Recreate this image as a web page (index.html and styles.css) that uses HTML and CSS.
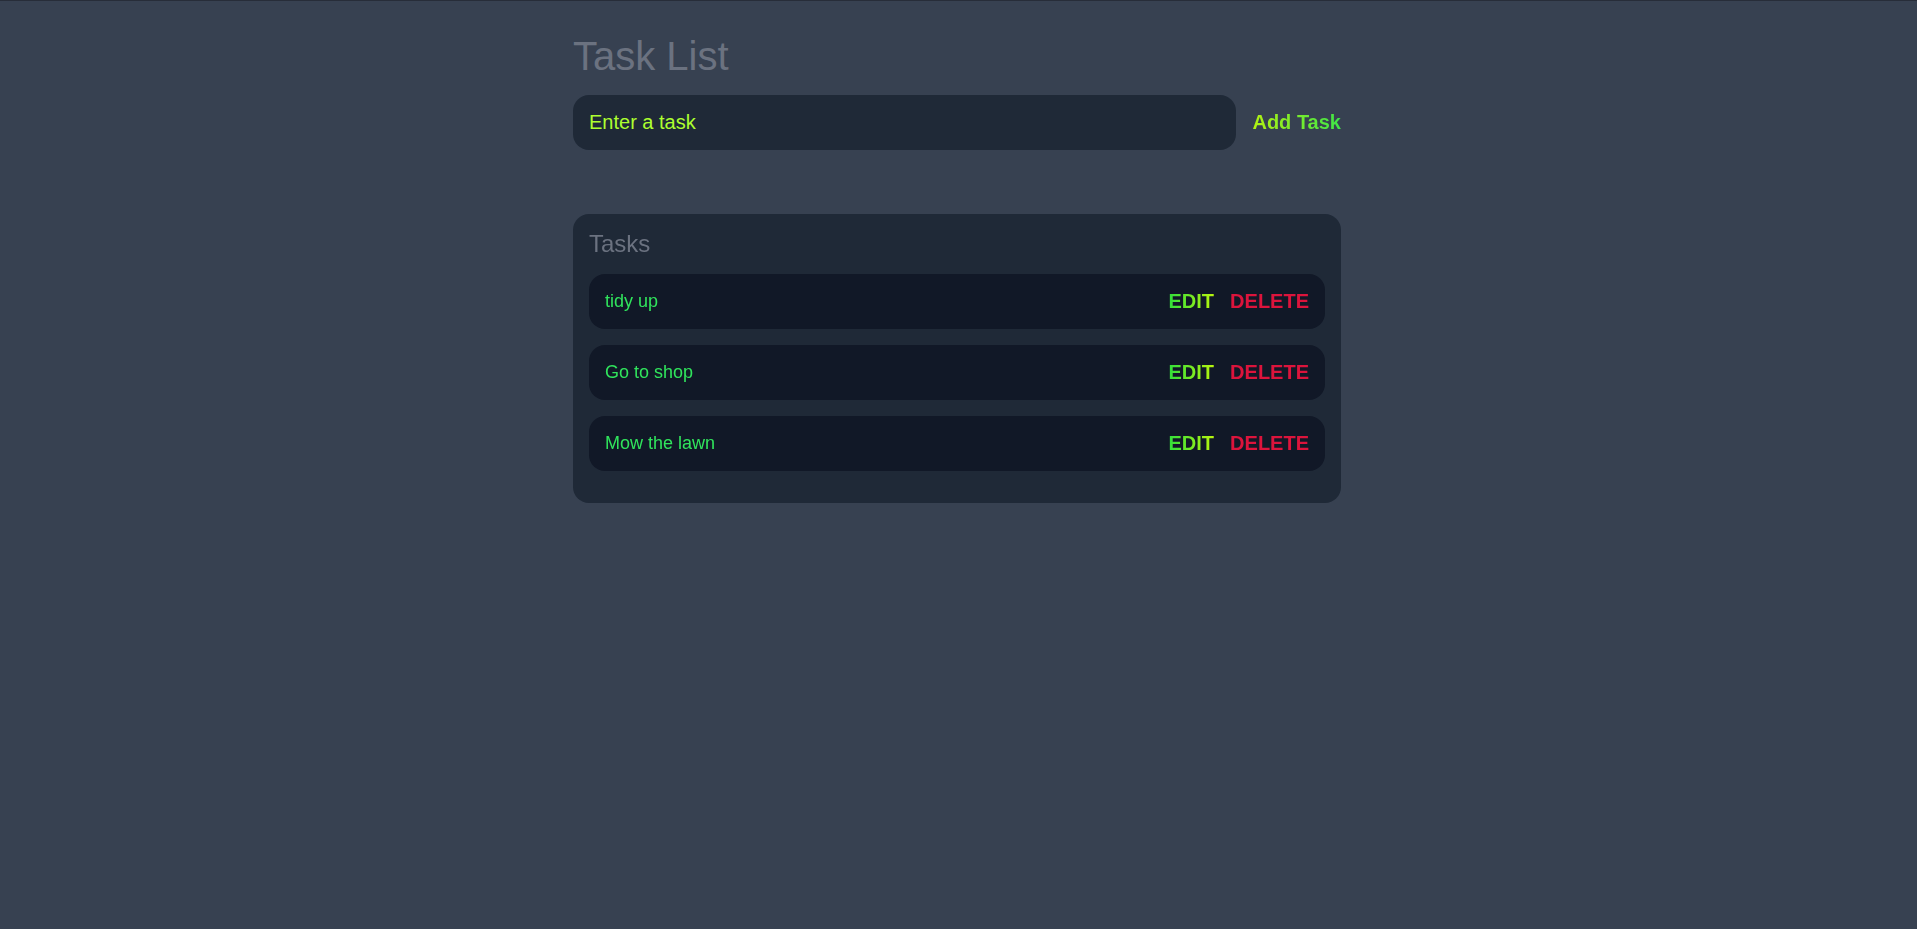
FILE: index.html
```html
<!DOCTYPE html>
<html lang="en">
<head>
<meta charset="utf-8">
<title>Task List</title>
<link rel="stylesheet" href="styles.css">
</head>
<body>
<main class="app">
  <h1 class="title">Task List</h1>
  <form class="add-form" onsubmit="return false;">
    <input class="task-input" type="text" placeholder="Enter a task" autofocus>
    <button class="add-btn" type="submit"><span class="grad-rev">Add Task</span></button>
  </form>
  <section class="panel">
    <h2 class="panel-title">Tasks</h2>
    <ul class="task-list">
      <li class="task">
        <span class="task-text">tidy up</span>
        <div class="actions">
          <button class="btn edit"><span class="grad">EDIT</span></button>
          <button class="btn delete">DELETE</button>
        </div>
      </li>
      <li class="task">
        <span class="task-text">Go to shop</span>
        <div class="actions">
          <button class="btn edit"><span class="grad">EDIT</span></button>
          <button class="btn delete">DELETE</button>
        </div>
      </li>
      <li class="task">
        <span class="task-text">Mow the lawn</span>
        <div class="actions">
          <button class="btn edit"><span class="grad">EDIT</span></button>
          <button class="btn delete">DELETE</button>
        </div>
      </li>
    </ul>
  </section>
</main>
</body>
</html>
```

FILE: styles.css
```css
html, body {
  margin: 0;
  padding: 0;
}
body {
  background: #374151;
  border-top: 1px solid #272d39;
  min-height: 100vh;
  box-sizing: border-box;
  font-family: "Liberation Sans", Arial, sans-serif;
}
.app {
  width: 768px;
  margin-left: calc(50% - 385.5px);
  padding-top: 33px;
}
.title {
  margin: 0 0 16px 0;
  font-size: 40px;
  font-weight: 400;
  line-height: normal;
  color: #6b7280;
}
.add-form {
  display: flex;
  align-items: center;
  gap: 16px;
  margin: 0 0 64px 0;
}
.task-input {
  flex: 1;
  height: 55px;
  box-sizing: border-box;
  padding: 16px;
  border: none;
  outline: none;
  border-radius: 16px;
  background: #1f2937;
  color: #adff2f;
  caret-color: #ffffff;
  font-family: "Liberation Sans", Arial, sans-serif;
  font-size: 20px;
}
.task-input::placeholder {
  color: #adff2f;
  opacity: 1;
}
.add-btn {
  background: none;
  border: none;
  padding: 0;
  font-family: "Liberation Sans", Arial, sans-serif;
  font-size: 20px;
  font-weight: 700;
  cursor: pointer;
}
.grad, .grad-rev {
  -webkit-background-clip: text;
  background-clip: text;
  color: transparent;
}
.grad {
  background-image: linear-gradient(to right, #32e03a, #b8f50e);
}
.grad-rev {
  background-image: linear-gradient(to right, #b2f212, #3ee548);
}
.panel {
  background: #1f2937;
  border-radius: 16px;
  padding: 16px;
}
.panel-title {
  margin: 0 0 16px 0;
  font-size: 24px;
  font-weight: 400;
  line-height: normal;
  color: #6b7280;
}
.task-list {
  list-style: none;
  margin: 0;
  padding: 0;
}
.task {
  display: flex;
  align-items: center;
  justify-content: space-between;
  background: #111827;
  border-radius: 16px;
  padding: 16px;
  margin-bottom: 16px;
}
.task-text {
  font-size: 18px;
  color: #30e45c;
}
.actions {
  display: flex;
  align-items: center;
  gap: 16px;
}
.btn {
  background: none;
  border: none;
  padding: 0;
  font-family: "Liberation Sans", Arial, sans-serif;
  font-size: 20px;
  font-weight: 700;
  line-height: normal;
  cursor: pointer;
}
.delete {
  color: #dc143c;
}
```
